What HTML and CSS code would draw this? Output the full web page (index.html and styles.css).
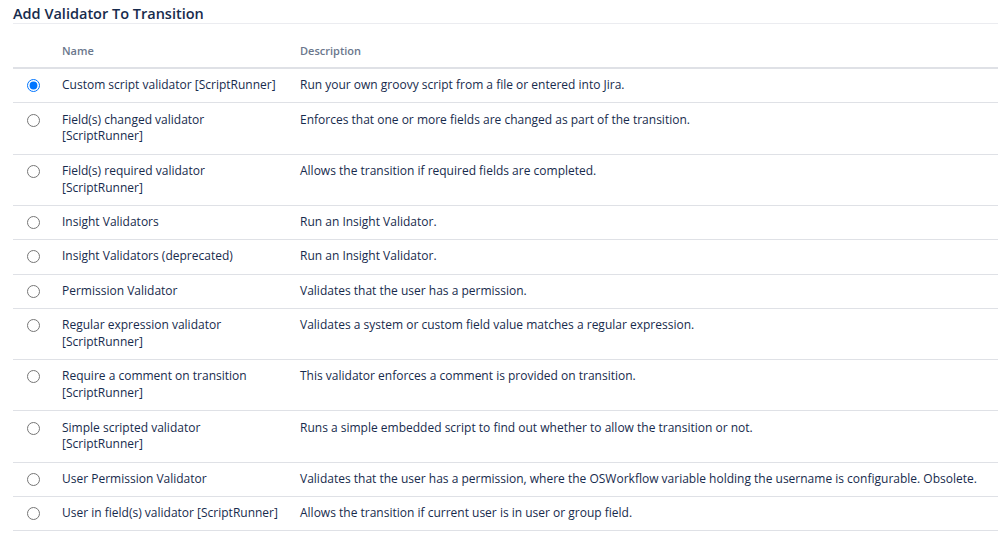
FILE: index.html
```html
<!DOCTYPE html>
<html lang="en">

<head>
    <meta charset="UTF-8">
    <title>Add Validator To Transition</title>
    <link rel="stylesheet" href="styles.css">
</head>

<body>
    <div class="panel">
        <h2 class="panel-title">Add Validator To Transition</h2>
        <table class="validators">
            <thead>
                <tr>
                    <th class="col-radio"></th>
                    <th class="col-name">Name</th>
                    <th class="col-desc">Description</th>
                </tr>
            </thead>
            <tbody>
                <tr>
                    <td class="col-radio"><input type="radio" name="validator" checked></td>
                    <td class="col-name">Custom script validator [ScriptRunner]</td>
                    <td class="col-desc">Run your own groovy script from a file or entered into Jira.</td>
                </tr>
                <tr>
                    <td class="col-radio"><input type="radio" name="validator"></td>
                    <td class="col-name">Field(s) changed validator<br>[ScriptRunner]</td>
                    <td class="col-desc">Enforces that one or more fields are changed as part of the transition.</td>
                </tr>
                <tr>
                    <td class="col-radio"><input type="radio" name="validator"></td>
                    <td class="col-name">Field(s) required validator<br>[ScriptRunner]</td>
                    <td class="col-desc">Allows the transition if required fields are completed.</td>
                </tr>
                <tr>
                    <td class="col-radio"><input type="radio" name="validator"></td>
                    <td class="col-name">Insight Validators</td>
                    <td class="col-desc">Run an Insight Validator.</td>
                </tr>
                <tr>
                    <td class="col-radio"><input type="radio" name="validator"></td>
                    <td class="col-name">Insight Validators (deprecated)</td>
                    <td class="col-desc">Run an Insight Validator.</td>
                </tr>
                <tr>
                    <td class="col-radio"><input type="radio" name="validator"></td>
                    <td class="col-name">Permission Validator</td>
                    <td class="col-desc">Validates that the user has a permission.</td>
                </tr>
                <tr>
                    <td class="col-radio"><input type="radio" name="validator"></td>
                    <td class="col-name">Regular expression validator<br>[ScriptRunner]</td>
                    <td class="col-desc">Validates a system or custom field value matches a regular expression.</td>
                </tr>
                <tr>
                    <td class="col-radio"><input type="radio" name="validator"></td>
                    <td class="col-name">Require a comment on transition<br>[ScriptRunner]</td>
                    <td class="col-desc">This validator enforces a comment is provided on transition.</td>
                </tr>
                <tr>
                    <td class="col-radio"><input type="radio" name="validator"></td>
                    <td class="col-name">Simple scripted validator<br>[ScriptRunner]</td>
                    <td class="col-desc">Runs a simple embedded script to find out whether to allow the transition or not.</td>
                </tr>
                <tr>
                    <td class="col-radio"><input type="radio" name="validator"></td>
                    <td class="col-name">User Permission Validator</td>
                    <td class="col-desc">Validates that the user has a permission, where the OSWorkflow variable holding the username is configurable. Obsolete.</td>
                </tr>
                <tr>
                    <td class="col-radio"><input type="radio" name="validator"></td>
                    <td class="col-name">User in field(s) validator [ScriptRunner]</td>
                    <td class="col-desc">Allows the transition if current user is in user or group field.</td>
                </tr>
            </tbody>
        </table>
    </div>
</body>

</html>
```

FILE: styles.css
```css
/* Estilos generales */
body {
    margin: 0;
    padding: 0 0 0 13px;
    font-family: "Open Sans", "Noto Sans", sans-serif;
    font-size: 12px;
    color: #172b4d;
    background-color: #fff;
    overflow: hidden;
}

.panel-title {
    margin: 0;
    padding: 6px 0 2px;
    font-size: 14.5px;
    font-weight: 600;
    line-height: 15px;
    border-bottom: 1px solid #ebecf0;
}

.validators {
    width: 100%;
    border-collapse: collapse;
    table-layout: fixed;
    white-space: nowrap;
}

.validators th,
.validators td {
    text-align: left;
    vertical-align: top;
    padding: 8.3px 0;
    line-height: 16.8px;
}

.validators th {
    font-size: 11px;
    font-weight: 600;
    color: #6b778c;
    line-height: 17px;
    padding: 18px 0 8px;
    border-bottom: 2px solid #dfe1e6;
}

.validators td {
    border-bottom: 1px solid #dfe1e6;
}

.col-radio {
    width: 49px;
}

.validators td.col-radio {
    padding-left: 14px;
    font-size: 0;
}

.col-name {
    width: 238px;
}

/* Radio */
.validators input[type="radio"] {
    margin: 2px 0 0;
    width: 13px;
    height: 13px;
    vertical-align: top;
}
```
